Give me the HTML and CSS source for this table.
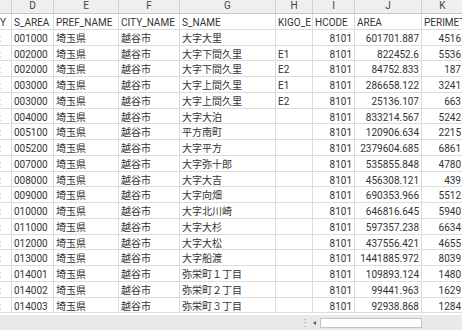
FILE: index.html
```html
<!DOCTYPE html>
<html lang="ja">
<head>
<meta charset="utf-8">
<link rel="stylesheet" href="styles.css">
</head>
<body>
<div class="sheet">
  <div class="grid">
    <div class="ch"></div><div class="ch">D</div><div class="ch">E</div><div class="ch">F</div><div class="ch">G</div><div class="ch">H</div><div class="ch">I</div><div class="ch">J</div><div class="ch">K</div>

    <div class="c cut">Y</div><div class="c">S_AREA</div><div class="c">PREF_NAME</div><div class="c">CITY_NAME</div><div class="c">S_NAME</div><div class="c">KIGO_E</div><div class="c">HCODE</div><div class="c">AREA</div><div class="c">PERIMETER</div>

    <div class="c cut"><span class="mark">:</span></div><div class="c">001000</div><div class="c">埼玉県</div><div class="c">越谷市</div><div class="c">大字大里</div><div class="c"></div><div class="c n">8101</div><div class="c n">601701.887</div><div class="c n">4516</div>
    <div class="c cut"><span class="mark">:</span></div><div class="c">002000</div><div class="c">埼玉県</div><div class="c">越谷市</div><div class="c">大字下間久里</div><div class="c">E1</div><div class="c n">8101</div><div class="c n">822452.6</div><div class="c n">5536</div>
    <div class="c cut"><span class="mark">:</span></div><div class="c">002000</div><div class="c">埼玉県</div><div class="c">越谷市</div><div class="c">大字下間久里</div><div class="c">E2</div><div class="c n">8101</div><div class="c n">84752.833</div><div class="c n">187</div>
    <div class="c cut"><span class="mark">:</span></div><div class="c">003000</div><div class="c">埼玉県</div><div class="c">越谷市</div><div class="c">大字上間久里</div><div class="c">E1</div><div class="c n">8101</div><div class="c n">286658.122</div><div class="c n">3241</div>
    <div class="c cut"><span class="mark">:</span></div><div class="c">003000</div><div class="c">埼玉県</div><div class="c">越谷市</div><div class="c">大字上間久里</div><div class="c">E2</div><div class="c n">8101</div><div class="c n">25136.107</div><div class="c n">663</div>
    <div class="c cut"><span class="mark">:</span></div><div class="c">004000</div><div class="c">埼玉県</div><div class="c">越谷市</div><div class="c">大字大泊</div><div class="c"></div><div class="c n">8101</div><div class="c n">833214.567</div><div class="c n">5242</div>
    <div class="c cut"><span class="mark">:</span></div><div class="c">005100</div><div class="c">埼玉県</div><div class="c">越谷市</div><div class="c">平方南町</div><div class="c"></div><div class="c n">8101</div><div class="c n">120906.634</div><div class="c n">2215</div>
    <div class="c cut"><span class="mark">:</span></div><div class="c">005200</div><div class="c">埼玉県</div><div class="c">越谷市</div><div class="c">大字平方</div><div class="c"></div><div class="c n">8101</div><div class="c n">2379604.685</div><div class="c n">6861</div>
    <div class="c cut"><span class="mark">:</span></div><div class="c">007000</div><div class="c">埼玉県</div><div class="c">越谷市</div><div class="c">大字弥十郎</div><div class="c"></div><div class="c n">8101</div><div class="c n">535855.848</div><div class="c n">4780</div>
    <div class="c cut"><span class="mark">:</span></div><div class="c">008000</div><div class="c">埼玉県</div><div class="c">越谷市</div><div class="c">大字大吉</div><div class="c"></div><div class="c n">8101</div><div class="c n">456308.121</div><div class="c n">439</div>
    <div class="c cut"><span class="mark">:</span></div><div class="c">009000</div><div class="c">埼玉県</div><div class="c">越谷市</div><div class="c">大字向畑</div><div class="c"></div><div class="c n">8101</div><div class="c n">690353.966</div><div class="c n">5512</div>
    <div class="c cut"><span class="mark">:</span></div><div class="c">010000</div><div class="c">埼玉県</div><div class="c">越谷市</div><div class="c">大字北川崎</div><div class="c"></div><div class="c n">8101</div><div class="c n">646816.645</div><div class="c n">5940</div>
    <div class="c cut"><span class="mark">:</span></div><div class="c">011000</div><div class="c">埼玉県</div><div class="c">越谷市</div><div class="c">大字大杉</div><div class="c"></div><div class="c n">8101</div><div class="c n">597357.238</div><div class="c n">6634</div>
    <div class="c cut"><span class="mark">:</span></div><div class="c">012000</div><div class="c">埼玉県</div><div class="c">越谷市</div><div class="c">大字大松</div><div class="c"></div><div class="c n">8101</div><div class="c n">437556.421</div><div class="c n">4655</div>
    <div class="c cut"><span class="mark">:</span></div><div class="c">013000</div><div class="c">埼玉県</div><div class="c">越谷市</div><div class="c">大字船渡</div><div class="c"></div><div class="c n">8101</div><div class="c n">1441885.972</div><div class="c n">8039</div>
    <div class="c cut"><span class="mark">:</span></div><div class="c">014001</div><div class="c">埼玉県</div><div class="c">越谷市</div><div class="c">弥栄町１丁目</div><div class="c"></div><div class="c n">8101</div><div class="c n">109893.124</div><div class="c n">1480</div>
    <div class="c cut"><span class="mark">:</span></div><div class="c">014002</div><div class="c">埼玉県</div><div class="c">越谷市</div><div class="c">弥栄町２丁目</div><div class="c"></div><div class="c n">8101</div><div class="c n">99441.963</div><div class="c n">1629</div>
    <div class="c cut"><span class="mark">:</span></div><div class="c">014003</div><div class="c">埼玉県</div><div class="c">越谷市</div><div class="c">弥栄町３丁目</div><div class="c"></div><div class="c n">8101</div><div class="c n">92938.868</div><div class="c n">1284</div>
  </div>
  <div class="bar">
    <div class="tabs"></div>
    <div class="grip">⋮</div>
    <div class="arrow"></div>
    <div class="thumb"></div>
  </div>
</div>
</body>
</html>
```

FILE: styles.css
```css
html, body {
  margin: 0;
  padding: 0;
  background: #ffffff;
}
.sheet {
  width: 462px;
  height: 330px;
  overflow: hidden;
  display: flex;
  flex-direction: column;
  font-family: Roboto, "Noto Sans CJK JP", sans-serif;
  font-size: 10px;
  color: #333333;
}
.grid {
  display: grid;
  grid-template-columns: 12px 42px 65px 61px 96px 37px 42px 67px 42px;
  grid-template-rows: 14px repeat(19, 15.75px);
  width: 464px;
  flex: none;
}
.ch {
  box-sizing: border-box;
  background: #efefef;
  border-right: 1px solid #d0d0d0;
  border-bottom: 1px solid #c6c6c6;
  color: #444444;
  text-align: center;
  line-height: 12px;
  font-size: 10px;
}
.c {
  box-sizing: border-box;
  border-right: 1px solid #dcdcdc;
  border-bottom: 1px solid #dcdcdc;
  padding: 1px 2px 0;
  white-space: nowrap;
  overflow: hidden;
  line-height: 15px;
}
.n {
  text-align: right;
}
.cut {
  padding: 1px 0 0;
  overflow: hidden;
}
.mark {
  display: block;
  margin-left: -2px;
  color: #3a6fd4;
  font-weight: bold;
}
.bar {
  flex: 1;
  background: #e9e9e9;
  border-top: 2px solid #ffffff;
  display: flex;
  align-items: center;
}
.tabs {
  flex: 0 0 300px;
}
.grip {
  width: 8px;
  color: #9a9a9a;
  font-size: 10px;
  line-height: 10px;
  text-align: center;
}
.arrow {
  margin-left: 5px;
  width: 0;
  height: 0;
  border-top: 2.5px solid transparent;
  border-bottom: 2.5px solid transparent;
  border-right: 3px solid #555555;
}
.thumb {
  margin-left: 4px;
  width: 100px;
  height: 8px;
  background: #ffffff;
  border: 1px solid #c4c4c4;
}
```
